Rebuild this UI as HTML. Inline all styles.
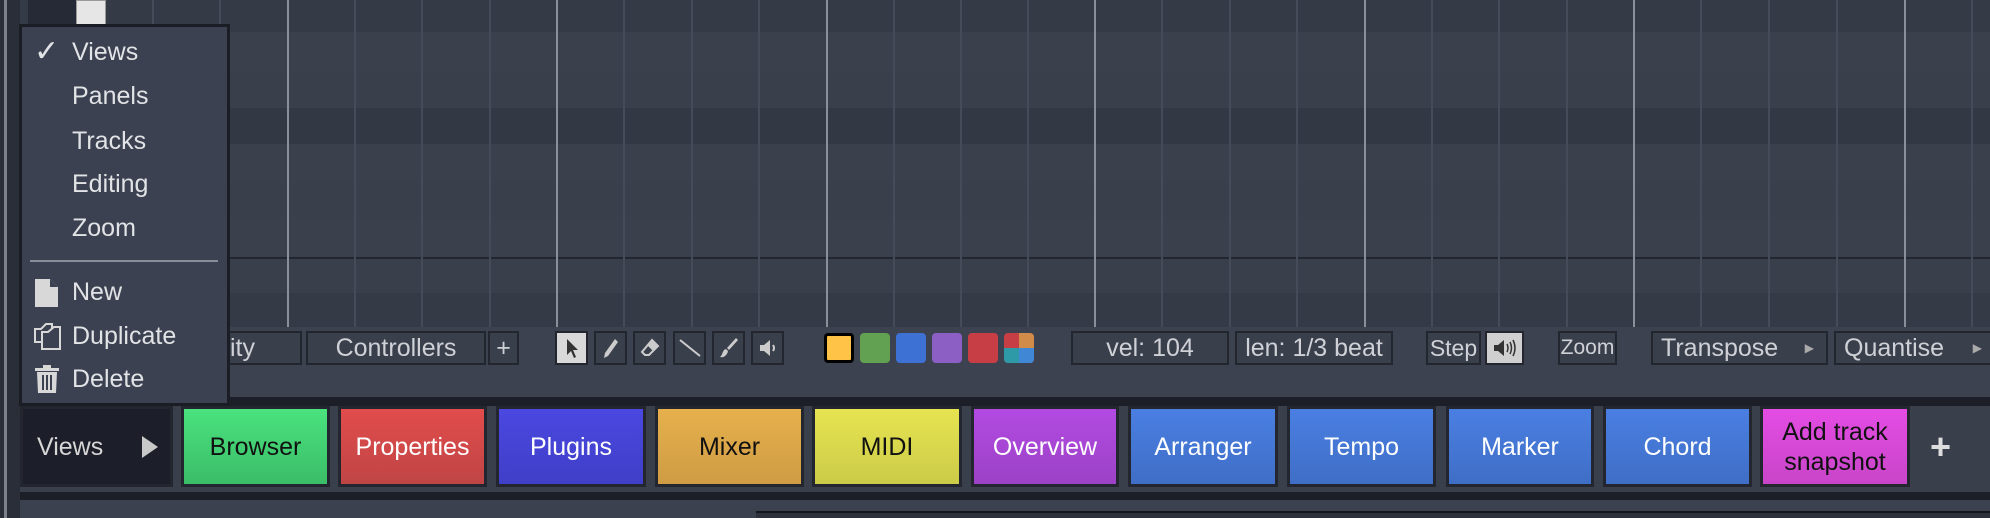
<!DOCTYPE html>
<html><head><meta charset="utf-8"><style>
*{margin:0;padding:0;box-sizing:border-box}
body{width:1990px;height:518px;overflow:hidden;background:#3c4150;font-family:"Liberation Sans",sans-serif;position:relative;color:#dcdcdc}
.a{position:absolute}
.band{position:absolute;left:0;width:1990px}
.vl{position:absolute;top:0;height:327px;width:2px;background:#454b59}
.vb{background:#8a8f9a}
.tb{position:absolute;top:331px;height:34px;border:2px solid #23262e;background:#3a3f4c;color:#cfd1d6;font-size:25px;display:flex;align-items:center;justify-content:center}
.btn{position:absolute;top:406px;height:81px;border:3px solid #23262e;display:flex;align-items:center;justify-content:center;font-size:25px;text-align:center;line-height:30px}
.mi{position:absolute;left:72px;font-size:25px;color:#e2e3e6}
.sw{position:absolute;top:333px;width:30px;height:30px;border-radius:4px}
</style></head><body>
<div class="band" style="top:0;height:32px;background:#353a47"></div>
<div class="band" style="top:32px;height:40px;background:#3b404d"></div>
<div class="band" style="top:72px;height:36px;background:#3a3f4c"></div>
<div class="band" style="top:108px;height:36px;background:#333845"></div>
<div class="band" style="top:144px;height:38px;background:#3b404d"></div>
<div class="band" style="top:182px;height:36px;background:#3a3f4c"></div>
<div class="band" style="top:218px;height:39px;background:#3b404d"></div>
<div class="band" style="top:257px;height:2px;background:#23262e"></div>
<div class="band" style="top:259px;height:34px;background:#3a3f4c"></div>
<div class="band" style="top:293px;height:34px;background:#353a47"></div>
<div class="vl" style="left:152px"></div><div class="vl" style="left:219px"></div>
<div class="vl vb" style="left:287px"></div><div class="vl" style="left:354px"></div><div class="vl" style="left:421px"></div><div class="vl" style="left:489px"></div>
<div class="vl vb" style="left:556px"></div><div class="vl" style="left:623px"></div><div class="vl" style="left:691px"></div><div class="vl" style="left:758px"></div>
<div class="vl vb" style="left:826px"></div><div class="vl" style="left:893px"></div><div class="vl" style="left:960px"></div><div class="vl" style="left:1027px"></div>
<div class="vl vb" style="left:1094px"></div><div class="vl" style="left:1161px"></div><div class="vl" style="left:1229px"></div><div class="vl" style="left:1296px"></div>
<div class="vl vb" style="left:1364px"></div><div class="vl" style="left:1431px"></div><div class="vl" style="left:1498px"></div><div class="vl" style="left:1566px"></div>
<div class="vl vb" style="left:1633px"></div><div class="vl" style="left:1700px"></div><div class="vl" style="left:1768px"></div><div class="vl" style="left:1836px"></div>
<div class="vl vb" style="left:1904px"></div><div class="vl" style="left:1971px"></div>
<div class="a" style="left:0;top:0;width:20px;height:518px;background:#2a2e38"></div>
<div class="a" style="left:4px;top:0;width:3px;height:518px;background:#7d818b"></div>
<div class="a" style="left:28px;top:0;width:48px;height:26px;background:#262a36"></div>
<div class="a" style="left:76px;top:0;width:30px;height:25px;background:#e6e6e6;border:1px solid #999"></div>
<div class="a" style="left:20px;top:327px;width:1970px;height:70px;background:#3d4250"></div>
<div class="a" style="left:20px;top:397px;width:1970px;height:9px;background:#1c1f27"></div>
<div class="tb" style="left:178px;width:124px;justify-content:flex-start;padding-left:50px">ity</div>
<div class="tb" style="left:306px;width:180px">Controllers</div>
<div class="tb" style="left:488px;width:31px">+</div>
<div class="tb" style="left:555px;width:33px;background:#d9d9d9"><svg width="16" height="22" viewBox="0 0 16 22"><path d="M3 2 L3 18 L7 14 L10 21 L12 20 L9 13 L14 13 Z" fill="#333"/></svg></div>
<div class="tb" style="left:594px;width:33px"><svg width="18" height="22" viewBox="0 0 18 22"><path d="M13 2 L16 5 L6 19 L2 21 L3 16 Z" fill="#ccc"/></svg></div>
<div class="tb" style="left:633px;width:33px"><svg width="20" height="20" viewBox="0 0 20 20"><path d="M12 2 L18 8 L9 17 L5 17 L2 14 Z" fill="none" stroke="#ccc" stroke-width="2"/><path d="M12 2 L18 8 L13 13 L7 7Z" fill="#ccc"/></svg></div>
<div class="tb" style="left:673px;width:33px"><svg width="22" height="22"><path d="M1 3 L21 19" stroke="#ccc" stroke-width="2"/></svg></div>
<div class="tb" style="left:712px;width:33px"><svg width="20" height="22" viewBox="0 0 20 22"><path d="M17 1 L19 3 L10 13 L8 11Z M7 12 L9 14 C8 19 4 21 1 20 C4 18 3 13 7 12Z" fill="#ccc"/></svg></div>
<div class="tb" style="left:751px;width:33px"><svg width="20" height="22" viewBox="0 0 20 22"><path d="M2 8 H6 L12 3 V19 L6 14 H2Z" fill="#ccc"/><path d="M15 8 Q17 11 15 14" stroke="#ccc" fill="none" stroke-width="2"/></svg></div>
<div class="sw" style="left:824px;background:#ffc447;border:3px solid #000"></div>
<div class="sw" style="left:860px;background:#62a052"></div>
<div class="sw" style="left:896px;background:#3e71d4"></div>
<div class="sw" style="left:932px;background:#8c5fc4"></div>
<div class="sw" style="left:968px;background:#c83e45"></div>
<div class="sw" style="left:1004px;background:linear-gradient(to right,#c83e45 50%,#d38b4a 50%);overflow:hidden"><div style="position:absolute;top:15px;left:0;width:15px;height:15px;background:#2e9aa8"></div><div style="position:absolute;top:15px;left:15px;width:15px;height:15px;background:#4088d6"></div></div>
<div class="tb" style="left:1071px;width:158px">vel: 104</div>
<div class="tb" style="left:1235px;width:158px">len: 1/3 beat</div>
<div class="tb" style="left:1426px;width:55px;font-size:23px">Step</div>
<div class="tb" style="left:1485px;width:39px;background:#d0d0d0"><svg width="26" height="22" viewBox="0 0 26 22"><path d="M2 8 H6 L12 3 V19 L6 14 H2Z" fill="#333"/><path d="M15 7 Q17 11 15 15 M18 5 Q21 11 18 17 M21 3 Q25 11 21 19" stroke="#333" fill="none" stroke-width="1.5"/></svg></div>
<div class="tb" style="left:1558px;width:59px;font-size:21px">Zoom</div>
<div class="tb" style="left:1651px;width:177px;justify-content:space-between;padding:0 12px 0 8px">Transpose<span style="font-size:12px;color:#aaa">▶</span></div>
<div class="tb" style="left:1834px;width:170px;justify-content:space-between;padding:0 20px 0 8px">Quantise<span style="font-size:12px;color:#aaa">▶</span></div>
<div class="a" style="left:20px;top:406px;width:1970px;height:91px;background:#3a3f4c"></div>
<div class="a" style="left:20px;top:492px;width:1970px;height:8px;background:#1c1f27"></div>
<div class="a" style="left:756px;top:511px;width:1234px;height:7px;background:#2e323d;border-top:2px solid #15171d"></div>
<div class="btn" style="left:20px;width:153px;background:#1c1f29;color:#d6d6d6;justify-content:space-between;padding:0 10px 0 14px">Views<svg width="20" height="26"><path d="M2 2 L18 13 L2 24Z" fill="#c8c8c8"/></svg></div>
<div class="btn" style="left:181px;width:149px;background:linear-gradient(#4ae27e,#3bbd68);color:#111">Browser</div>
<div class="btn" style="left:338px;width:149px;background:linear-gradient(#e24c4c,#c04545);color:#fff">Properties</div>
<div class="btn" style="left:496px;width:150px;background:linear-gradient(#4a48e0,#3f3fc8);color:#fff">Plugins</div>
<div class="btn" style="left:655px;width:149px;background:linear-gradient(#e6b04c,#cf9c44);color:#111">Mixer</div>
<div class="btn" style="left:812px;width:150px;background:linear-gradient(#e6e450,#cccb48);color:#111">MIDI</div>
<div class="btn" style="left:971px;width:148px;background:linear-gradient(#b24ae2,#9c42c6);color:#fff">Overview</div>
<div class="btn" style="left:1128px;width:150px;background:linear-gradient(#4a7fe2,#3f6ec6);color:#fff">Arranger</div>
<div class="btn" style="left:1287px;width:149px;background:linear-gradient(#4a7fe2,#3f6ec6);color:#fff">Tempo</div>
<div class="btn" style="left:1446px;width:148px;background:linear-gradient(#4a7fe2,#3f6ec6);color:#fff">Marker</div>
<div class="btn" style="left:1603px;width:149px;background:linear-gradient(#4a7fe2,#3f6ec6);color:#fff">Chord</div>
<div class="btn" style="left:1760px;width:150px;background:linear-gradient(#e44ce4,#c845c8);color:#111">Add track<br>snapshot</div>
<div class="a" style="left:1930px;top:426px;font-size:36px;font-weight:bold;color:#ddd">+</div>
<div class="a" style="left:19px;top:24px;width:211px;height:382px;background:#3b4150;border:3px solid #1b1d24"></div>
<div class="a" style="left:30px;top:260px;width:188px;height:2px;background:#8a8e98"></div>
<div class="mi" style="left:34px;top:34px;font-size:30px">✓</div>
<div class="mi" style="top:38px">Views</div>
<div class="mi" style="top:82px">Panels</div>
<div class="mi" style="top:127px">Tracks</div>
<div class="mi" style="top:170px">Editing</div>
<div class="mi" style="top:214px">Zoom</div>
<div class="a" style="left:34px;top:279px"><svg width="26" height="28" viewBox="0 0 26 28"><path d="M1 0 H16 L24 8 V28 H1Z" fill="#d8d8d8"/><path d="M16 0 V8 H24" fill="#3b4150"/></svg></div>
<div class="mi" style="top:278px">New</div>
<div class="a" style="left:32px;top:322px"><svg width="30" height="30" viewBox="0 0 30 30" fill="none" stroke="#d8d8d8" stroke-width="2"><path d="M3 7 H9 L14 2 H20 V20 H3Z"/><path d="M10 10 H16 L22 5 H28 V27 H10Z" fill="#3b4150"/></svg></div>
<div class="mi" style="top:322px">Duplicate</div>
<div class="a" style="left:34px;top:364px"><svg width="26" height="30" viewBox="0 0 26 30"><rect x="1" y="4" width="24" height="3" fill="#d8d8d8"/><rect x="9" y="1" width="8" height="4" fill="#d8d8d8"/><path d="M3 8 H23 L22 29 H4Z" fill="#d8d8d8"/><path d="M9 11 V26 M13 11 V26 M17 11 V26" stroke="#3b4150" stroke-width="2"/></svg></div>
<div class="mi" style="top:365px">Delete</div>
</body></html>
